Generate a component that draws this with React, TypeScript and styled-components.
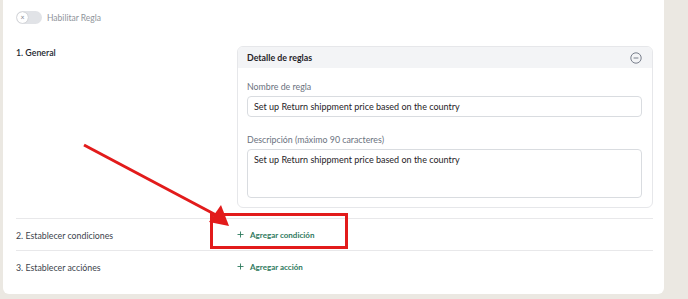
import styled, { createGlobalStyle } from 'styled-components';

const GlobalStyle = createGlobalStyle`
  html, body {
    margin: 0;
    padding: 0;
    background: #ebe8e2;
    font-family: Lato, 'Open Sans', sans-serif;
  }
`;

const Page = styled.div`
  width: 688px;
  height: 299px;
  padding: 0 24px 5px 3px;
  box-sizing: border-box;
  position: relative;
  overflow: hidden;
`;

const Card = styled.div`
  background: #ffffff;
  height: 294px;
  border-radius: 0 0 6px 6px;
  padding: 11px 11px 0 13px;
  box-sizing: border-box;
`;

const ToggleRow = styled.div`
  display: flex;
  align-items: center;
  height: 13px;
`;

const Switch = styled.div`
  width: 26px;
  min-width: 26px;
  height: 13px;
  border-radius: 7px;
  background: #e1e3e7;
  display: flex;
  align-items: center;
  padding-left: 1px;
  margin-right: 5px;
  box-sizing: border-box;
`;

const Knob = styled.span`
  display: block;
  width: 11px;
  height: 11px;
  border-radius: 50%;
  background: #fff;
  box-shadow: 0 0 1px rgba(0, 0, 0, 0.35);
  color: #7d838c;
  font-size: 7px;
  line-height: 11px;
  text-align: center;
`;

const ToggleText = styled.span`
  font-size: 8.5px;
  color: #8f949b;
`;

const Section = styled.div<{ $divider?: boolean; $height?: number }>`
  display: grid;
  grid-template-columns: 221px 416px;
  align-items: ${(p) => (p.$divider ? 'center' : 'start')};
  height: ${(p) => (p.$height ? `${p.$height}px` : 'auto')};
  border-top: ${(p) => (p.$divider ? '1px solid #e8e8ea' : 'none')};
`;

const SectionLabel = styled.div<{ $strong?: boolean }>`
  font-size: 8.8px;
  color: ${(p) => (p.$strong ? '#22272e' : '#3c434c')};
  font-weight: ${(p) => (p.$strong ? 600 : 400)};
  padding-top: 1px;
`;

const Panel = styled.div`
  border: 1px solid #e6e7ea;
  border-radius: 6px;
  overflow: hidden;
`;

const PanelHeader = styled.div`
  height: 21px;
  background: #f3f4f6;
  display: flex;
  align-items: center;
  justify-content: space-between;
  padding: 0 10px 0 9px;
  font-size: 8.8px;
  font-weight: 700;
  color: #1f2328;
`;

const PanelBody = styled.div`
  padding: 13px 10px 9px 9px;
  display: flex;
  flex-direction: column;
`;

const FieldLabel = styled.label<{ $top?: number }>`
  font-size: 8.8px;
  color: #6b7280;
  margin-top: ${(p) => p.$top ?? 0}px;
  margin-bottom: 4px;
  line-height: 11px;
`;

const TextInput = styled.div<{ $tall?: boolean }>`
  height: ${(p) => (p.$tall ? '49px' : '21px')};
  border: 1px solid #d9dce0;
  border-radius: 4px;
  box-sizing: border-box;
  padding: ${(p) => (p.$tall ? '4px 6px' : '0 6px')};
  display: flex;
  align-items: ${(p) => (p.$tall ? 'flex-start' : 'center')};
  font-size: 9px;
  color: #1f2328;
`;

const AddLink = styled.div`
  display: flex;
  align-items: center;
  gap: 6px;
  font-size: 8px;
  color: #2f7a5e;
  font-weight: 700;
`;

const Annotation = styled.svg`
  position: absolute;
  left: 0;
  top: 0;
  pointer-events: none;
`;

function MinusCircle() {
  return (
    <svg width="12" height="12" viewBox="0 0 12 12">
      <circle cx="6" cy="6" r="5.2" fill="none" stroke="#6b7280" strokeWidth="0.9" />
      <line x1="3.6" y1="6" x2="8.4" y2="6" stroke="#6b7280" strokeWidth="0.9" />
    </svg>
  );
}

function Plus() {
  return (
    <svg width="7" height="7" viewBox="0 0 7 7">
      <path d="M3.5 0.5V6.5M0.5 3.5H6.5" stroke="#2f7a5e" strokeWidth="0.9" />
    </svg>
  );
}

export default function App() {
  return (
    <>
      <GlobalStyle />
      <Page>
        <Card>
          <ToggleRow>
            <Switch>
              <Knob>×</Knob>
            </Switch>
            <ToggleText>Habilitar Regla</ToggleText>
          </ToggleRow>

          <Section style={{ marginTop: 22, marginBottom: 10 }}>
            <SectionLabel $strong>1. General</SectionLabel>
            <Panel>
              <PanelHeader>
                <span>Detalle de reglas</span>
                <MinusCircle />
              </PanelHeader>
              <PanelBody>
                <FieldLabel>Nombre de regla</FieldLabel>
                <TextInput>Set up Return shippment price based on the country</TextInput>
                <FieldLabel $top={17}>Descripción (máximo 90 caracteres)</FieldLabel>
                <TextInput $tall>Set up Return shippment price based on the country</TextInput>
              </PanelBody>
            </Panel>
          </Section>

          <Section $divider $height={31}>
            <SectionLabel>2. Establecer condiciones</SectionLabel>
            <AddLink>
              <Plus />
              Agregar condición
            </AddLink>
          </Section>
          <Section $divider $height={31}>
            <SectionLabel>3. Establecer acciónes</SectionLabel>
            <AddLink>
              <Plus />
              Agregar acción
            </AddLink>
          </Section>
        </Card>

        <Annotation width="688" height="299">
          <line x1="84" y1="145" x2="216" y2="215" stroke="#e21b1b" strokeWidth="3" />
          <polygon points="209,222 221,205 229,226" fill="#e21b1b" />
          <rect x="211.5" y="214.5" width="135" height="33" fill="none" stroke="#e21b1b" strokeWidth="3" />
        </Annotation>
      </Page>
    </>
  );
}
